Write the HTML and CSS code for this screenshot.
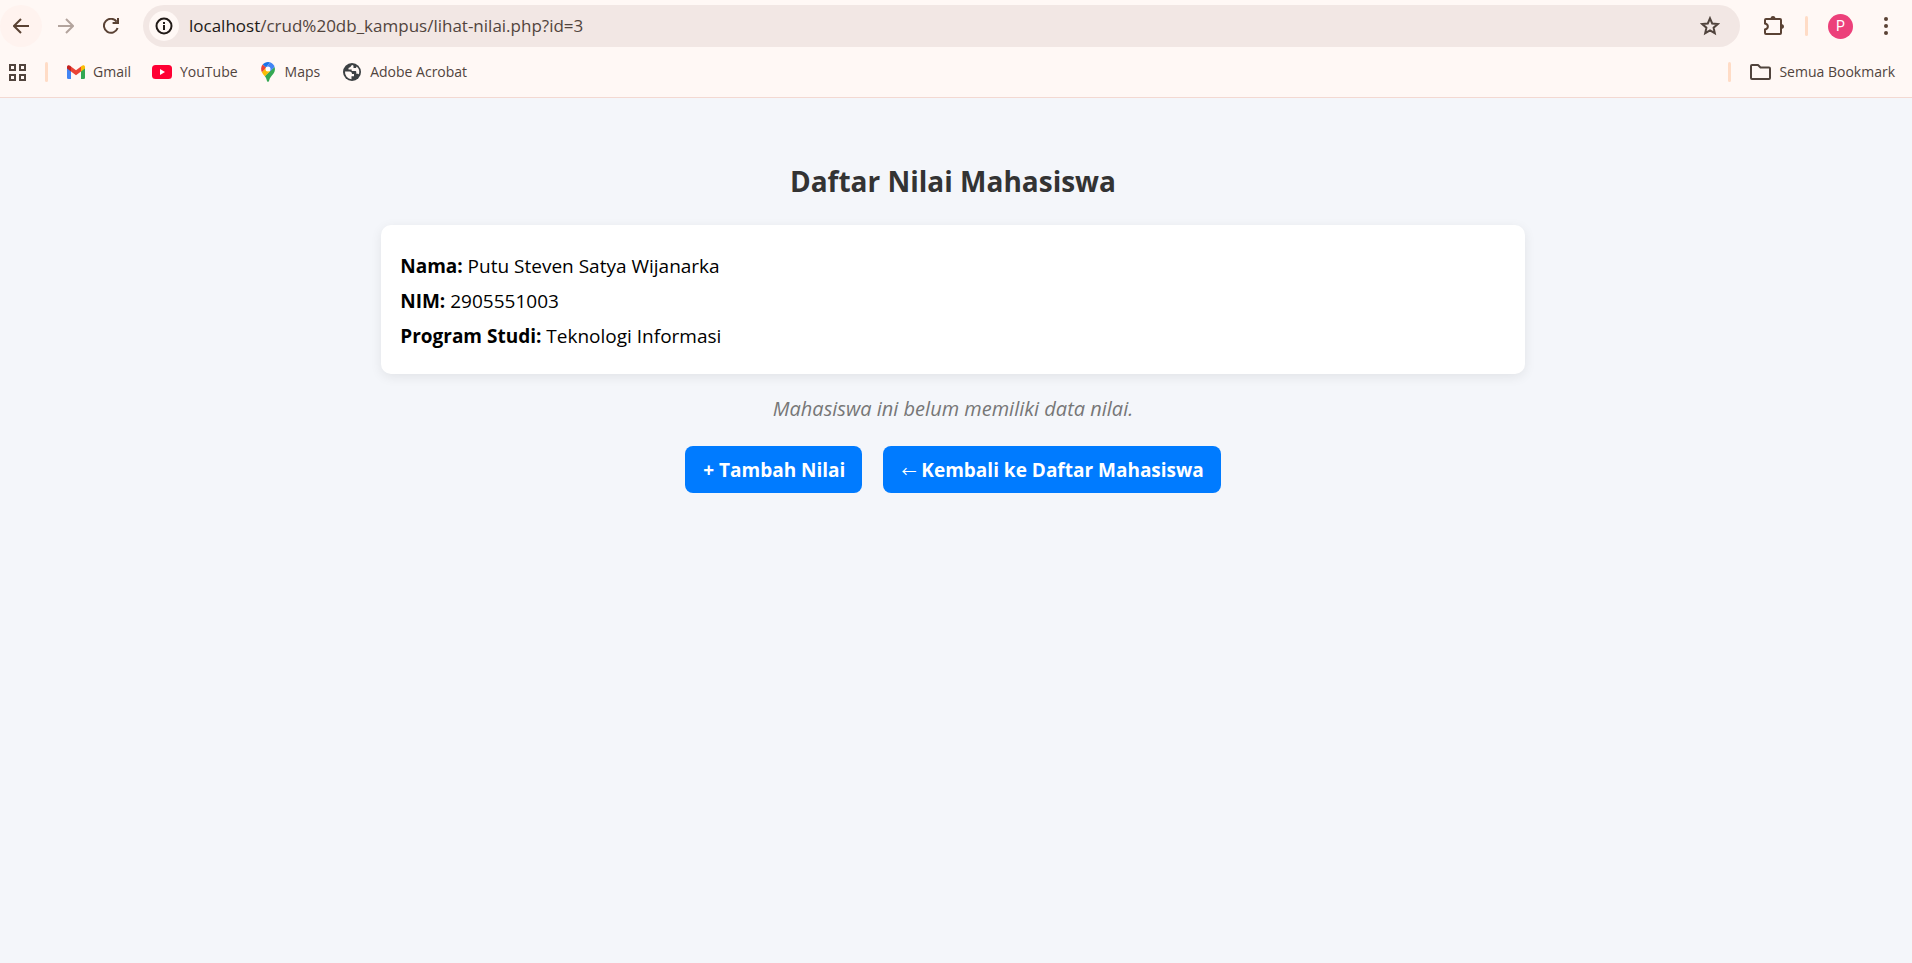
FILE: index.html
```html
<!DOCTYPE html>
<html lang="id">
<head>
<meta charset="utf-8">
<title>Daftar Nilai Mahasiswa</title>
<link rel="stylesheet" href="styles.css">
</head>
<body>
<header class="browser">
  <div class="toolbar">
    <button class="nav-button nav-back" aria-label="Kembali"><svg width="16" height="16" viewBox="0 0 16 16"><path d="M8 1L1 8l7 7M1 8h15"/></svg></button>
    <button class="nav-button nav-forward" aria-label="Maju"><svg width="16" height="16" viewBox="0 0 16 16"><path d="M8 1l7 7-7 7M15 8H0"/></svg></button>
    <button class="nav-button" aria-label="Muat ulang"><svg width="16" height="16" viewBox="0 0 16 16"><path d="M13.6 3.6A7 7 0 1 0 14.6 10M15 0v5H9.6"/></svg></button>
    <div class="omnibox">
      <button class="site-info" aria-label="Informasi situs"><svg width="18" height="18" viewBox="0 0 18 18"><circle cx="9" cy="9" r="7.5"/><path d="M9 8v5M9 5v2"/></svg></button>
      <div class="url"><span class="url-host">localhost</span>/crud%20db_kampus/lihat-nilai.php?id=3</div>
      <button class="star" aria-label="Bookmark"><svg width="20" height="20" viewBox="0 0 20 20"><path d="M10 2.3l2.2 5.2 5.6.5-4.2 3.7 1.2 5.5L10 14.3l-4.8 2.9 1.2-5.5L2.2 8l5.6-.5z"/></svg></button>
    </div>
    <div class="tools">
      <button class="tool-button" aria-label="Ekstensi"><svg width="22" height="22" viewBox="0 0 22 22"><path d="M3 4h14q1 0 1 1v13q0 1-1 1H3q-1 0-1-1v-3.500c3.800-.9 3.800-5.100 0-6V5q0-1 1-1z"/><path class="solid" d="M7.500 4a2.500 3 0 0 1 5 0zM18 9a3 2.500 0 0 1 0 5z"/></svg></button>
      <span class="divider"></span>
      <button class="avatar" aria-label="Profil">P</button>
      <button class="tool-button menu" aria-label="Menu"><svg width="6" height="18" viewBox="0 0 6 18"><circle cx="3" cy="2" r="2"/><circle cx="3" cy="9" r="2"/><circle cx="3" cy="16" r="2"/></svg></button>
    </div>
  </div>
  <nav class="bookmarks">
    <button class="apps" aria-label="Aplikasi"><svg width="19" height="19" viewBox="0 0 19 19"><path d="M2 2h5v5H2zM12 2h5v5h-5zM2 12h5v5H2zM12 12h5v5h-5z"/></svg></button>
    <span class="divider"></span>
    <a class="bookmark" href="#"><svg width="18" height="14" viewBox="0 0 18 14"><path fill="#4285f4" d="M0 2v10.700Q0 14 1.300 14H4V5z"/><path fill="#34a853" d="M18 2v10.700q0 1.300-1.300 1.300H14V5z"/><path fill="#ea4335" d="M4 1.400l5 3.800 5-3.800v5L9 10.200 4 6.400z"/><path fill="#c5221f" d="M0 2C0 .2 1.800-.4 3.200.7L4 1.400v5L0 3.400z"/><path fill="#fbbc04" d="M18 2c0-1.800-1.800-2.400-3.200-1.300l-.8.700v5l4-3z"/></svg>Gmail</a>
    <a class="bookmark youtube" href="#"><svg width="20" height="14" viewBox="0 0 20 14"><rect width="20" height="14" rx="3.500" fill="#ff0033"/><path fill="#fff" d="M8 4l5 3-5 3z"/></svg>YouTube</a>
    <a class="bookmark maps" href="#"><svg width="14" height="20" viewBox="0 0 14 20"><path fill="#34a853" d="M13.600 5c1.200 4-.9 6.500-3.100 9-1.300 1.600-2 3-2.400 4.800C7.800 20.300 6.200 20.300 5.900 18.800 5.500 17 5 15.700 3.800 14z"/><path fill="#fbbc04" d="M.9 10.300L4.800 5.500l4.300 3.700-5.300 5C2.500 12.700 1.500 11.600.9 10.300z"/><path fill="#ea4335" d="M1.700 2.500l3.500 3-4.300 4.800C-.4 7.600 0 4.600 1.700 2.500z"/><path fill="#1a73e8" d="M1.700 2.500C3 .9 5 0 7 0l2 .3-3.800 5.200z"/><path fill="#4285f4" d="M9 .3c2.200.7 3.800 2.400 4.600 4.700L9.100 9.200 5.200 5.200z"/><circle cx="7" cy="7" r="2.500" fill="#fff"/></svg>Maps</a>
    <a class="bookmark globe" href="#"><svg width="18" height="18" viewBox="0 0 18 18"><circle cx="9" cy="9" r="9" fill="#3c4043"/><path fill="#fff8f5" d="M2 8.500h4.500Q9 8.500 9 11h2v2.200H8.500v3A7 7 0 0 1 2 8.500zM10 2Q8 2 7.500 4L5.500 5v1.500h3.200V8h3.600q1 0 1 1.200v1.600h1.500q.7 0 1 .6Q17.500 6.500 13.500 3.500L13 5h-2.500V3.200z"/></svg>Adobe Acrobat</a>
    <div class="all-bookmarks">
      <span class="divider"></span>
      <a class="bookmark" href="#"><svg width="21" height="16" viewBox="0 0 21 16"><path fill="none" stroke="#51443d" stroke-width="2" stroke-linejoin="round" d="M2 1h6l2.500 2.500H19q1 0 1 1V14q0 1-1 1H2q-1 0-1-1V2q0-1 1-1z"/></svg>Semua Bookmark</a>
    </div>
  </nav>
</header>
<main class="page">
  <h1 class="title">Daftar Nilai Mahasiswa</h1>
  <section class="card">
    <p><strong>Nama:</strong> Putu Steven Satya Wijanarka</p>
    <p><strong>NIM:</strong> 2905551003</p>
    <p><strong>Program Studi:</strong> Teknologi Informasi</p>
  </section>
  <p class="empty">Mahasiswa ini belum memiliki data nilai.</p>
  <div class="actions">
    <a class="button" href="#">+ Tambah Nilai</a>
    <a class="button" href="#"><span class="arrow">←</span> Kembali ke Daftar Mahasiswa</a>
  </div>
</main>
</body>
</html>
```
FILE: styles.css
```css
* { box-sizing: border-box; }
body {
  margin: 0;
  min-height: 100vh;
  background: #f4f6fa;
  color: #000;
  font-family: "Open Sans", "Noto Sans", sans-serif;
}
button {
  padding: 0;
  border: 0;
  background: none;
  font-family: inherit;
  color: inherit;
}
svg { display: block; flex: none; }
.browser {
  height: 98px;
  border-bottom: 1px solid #f3d9d2;
  background: #fff8f5;
  color: #51443d;
}
.toolbar {
  display: flex;
  align-items: center;
  padding-top: 5px;
}
.nav-button {
  display: grid;
  place-items: center;
  width: 42px;
  height: 42px;
  margin-right: 3px;
  border-radius: 50%;
}
.nav-button svg { fill: none; stroke: #5a4234; stroke-width: 2; }
.nav-back { background: #fff3ef; }
.nav-forward svg { stroke: #b3a49d; }
.omnibox {
  display: flex;
  flex: 1;
  align-items: center;
  height: 42px;
  margin-left: 8px;
  padding: 0 20px 0 6px;
  border-radius: 21px;
  background: #f2e7e4;
}
.site-info {
  display: grid;
  place-items: center;
  width: 30px;
  height: 30px;
  border-radius: 50%;
  background: #fff8f5;
}
.site-info svg { fill: none; stroke: #211a17; stroke-width: 2; }
.url { flex: 1; margin-left: 10px; font-size: 17px; line-height: 24px; }
.url-host { color: #211a17; }
.star svg { fill: none; stroke: #51443d; stroke-width: 2; }
.tools { display: flex; align-items: center; padding: 0 23px 0 23px; }
.tool-button svg { fill: none; stroke: #5a4234; stroke-width: 2; }
.tool-button .solid, .menu svg { fill: #5a4234; stroke: none; }
.divider { width: 3px; height: 20px; border-radius: 2px; background: #ffdcc6; }
.tools .divider { margin: 0 20px; }
.avatar {
  width: 25px;
  height: 25px;
  margin-right: 30px;
  border-radius: 50%;
  background: #ec407a;
  color: #fff;
  font-family: Roboto, sans-serif;
  font-size: 14px;
}
.bookmarks {
  display: flex;
  align-items: center;
  height: 50px;
  padding: 0 17px 0 8px;
}
.apps { margin-right: 18px; }
.apps svg { fill: none; stroke: #51443d; stroke-width: 2; }
.bookmark {
  display: flex;
  align-items: center;
  gap: 8px;
  margin-left: 19px;
  color: #51443d;
  font-size: 14px;
  line-height: 20px;
  text-decoration: none;
}
.youtube { margin-left: 21px; }
.maps { gap: 10px; margin-left: 23px; }
.globe { gap: 9px; margin-left: 23px; }
.all-bookmarks { display: flex; align-items: center; margin-left: auto; }
.page {
  display: flex;
  flex-direction: column;
  align-items: center;
  padding: 64px 6px 0 0;
}
.title { margin: 0; color: #333; font-size: 28px; line-height: 38px; }
.card {
  width: 60%;
  margin-top: 25px;
  padding: 28px 19px 16px;
  border-radius: 10px;
  background: #fff;
  box-shadow: 0 3px 12px rgba(0, 0, 0, .08);
  font-size: 19px;
  line-height: 26px;
}
.card p { margin: 0 0 9px; }
.empty {
  margin: 22px 0 24px;
  color: #777;
  font-size: 20px;
  font-style: italic;
  line-height: 26px;
}
.actions { display: flex; gap: 21px; }
.button {
  padding: 11px 17px 9px 18px;
  border-radius: 8px;
  background: #007bff;
  color: #fff;
  font-size: 19px;
  font-weight: bold;
  line-height: 27px;
  text-decoration: none;
}
.arrow { font-family: "Noto Sans CJK SC", sans-serif; font-size: 15px; font-weight: normal; line-height: 20px; }
```
